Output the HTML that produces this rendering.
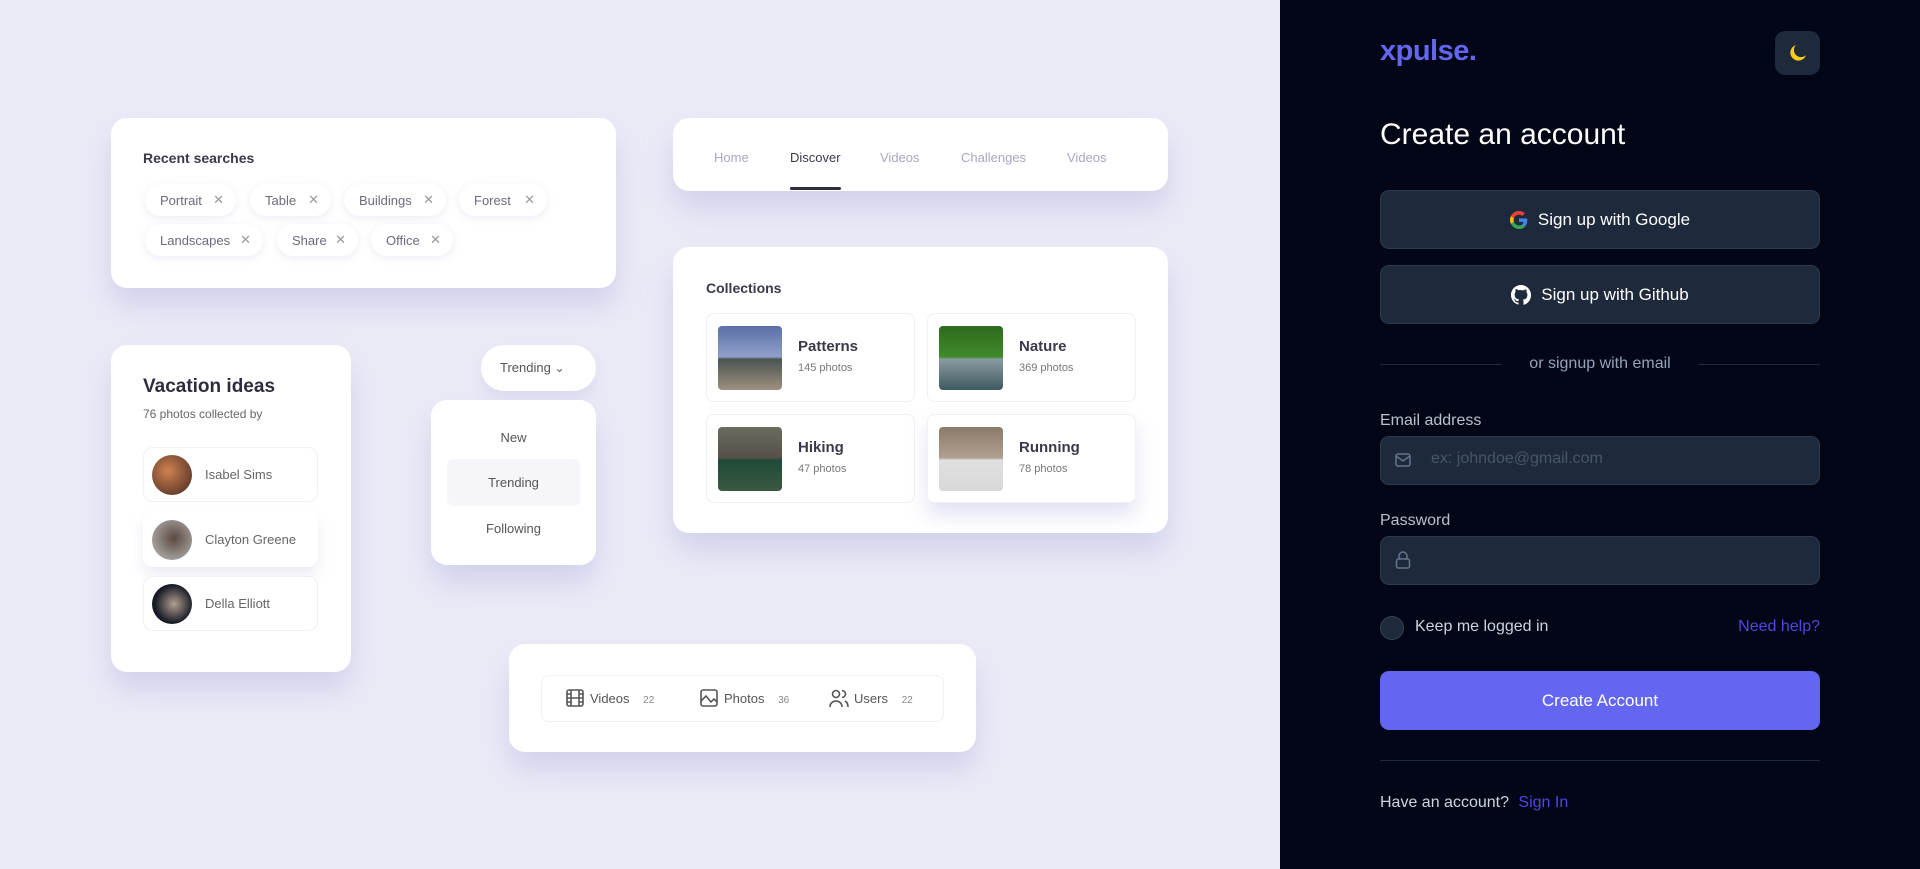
<!DOCTYPE html>
<html><head><meta charset="utf-8"><style>
*{box-sizing:border-box;margin:0;padding:0}
body{width:1920px;height:869px;overflow:hidden;position:relative;background:#ebebf7;font-family:"Liberation Sans",sans-serif}
.a{position:absolute}
.card{position:absolute;background:#fff;border-radius:16px;box-shadow:0 18px 30px rgba(160,160,215,.35)}
.chip{position:absolute;height:32px;border-radius:16px;background:#fff;box-shadow:0 2px 8px rgba(180,180,220,.25);font-size:13px;color:#6b6b7c;display:flex;align-items:center;padding-left:15px}
.chip span{position:absolute;right:12px;font-size:13px;color:#999}
.dark{position:absolute;left:1280px;top:0;width:640px;height:869px;background:#030616}
.btn{position:absolute;left:1380px;width:440px;border-radius:9px;background:#1e293b;border:1px solid #2c3a50;color:#fff;font-size:17px;display:flex;align-items:center;justify-content:center;gap:10px}
.lbl{position:absolute;left:1380px;color:#b8c0cc;font-size:16px}
.inp{position:absolute;left:1380px;width:440px;height:49px;border-radius:9px;background:#1e293b;border:1px solid #2c3a50}
.person{position:absolute;left:143px;width:175px;height:55px;border-radius:10px;background:#fff;border:1px solid #f0f0f5;display:flex;align-items:center;font-size:13px;color:#666}
.av{width:40px;height:40px;border-radius:50%;margin:0 13px 0 8px}
.col{position:absolute;width:209px;height:89px;border-radius:8px;border:1px solid #f0f0f5;background:#fff}
.th{position:absolute;left:11px;top:12px;width:64px;height:64px;border-radius:4px;overflow:hidden}
.ct{position:absolute;left:91px;top:24px;font-size:15px;font-weight:bold;color:#3a3a4a}
.cs{position:absolute;left:91px;top:48px;font-size:11px;color:#777}
.nav{position:absolute;top:150px;font-size:13px;color:#a7a7c0}
</style></head><body>

<div class="card" style="left:111px;top:118px;width:505px;height:170px"></div>
<div class="a" style="left:143px;top:150px;font-size:14px;font-weight:bold;color:#3a3a4a">Recent searches</div>
<div class="chip" style="left:145px;top:184px;width:91px">Portrait<span>✕</span></div>
<div class="chip" style="left:250px;top:184px;width:81px">Table<span>✕</span></div>
<div class="chip" style="left:344px;top:184px;width:102px">Buildings<span>✕</span></div>
<div class="chip" style="left:459px;top:184px;width:88px">Forest<span>✕</span></div>
<div class="chip" style="left:145px;top:224px;width:118px">Landscapes<span>✕</span></div>
<div class="chip" style="left:277px;top:224px;width:81px">Share<span>✕</span></div>
<div class="chip" style="left:371px;top:224px;width:82px">Office<span>✕</span></div>

<div class="card" style="left:673px;top:118px;width:495px;height:73px"></div>
<div class="nav" style="left:714px">Home</div>
<div class="nav" style="left:790px;color:#3a3a4a">Discover</div>
<div class="a" style="left:790px;top:187px;width:51px;height:3px;background:#2d2d45;border-radius:2px"></div>
<div class="nav" style="left:880px">Videos</div>
<div class="nav" style="left:961px">Challenges</div>
<div class="nav" style="left:1067px">Videos</div>

<div class="card" style="left:673px;top:247px;width:495px;height:286px"></div>
<div class="a" style="left:706px;top:280px;font-size:14px;font-weight:bold;color:#3a3a4a">Collections</div>
<div class="col" style="left:706px;top:313px"><div class="th" style="background:linear-gradient(180deg,#5b6fa8 0,#8fa0c8 48%,#4a5550 52%,#a09080 100%)"></div><div class="ct">Patterns</div><div class="cs">145 photos</div></div>
<div class="col" style="left:927px;top:313px"><div class="th" style="background:linear-gradient(180deg,#2f6a1e 0,#3f8a2a 48%,#8a9aa0 52%,#3d5a60 100%)"></div><div class="ct">Nature</div><div class="cs">369 photos</div></div>
<div class="col" style="left:706px;top:414px"><div class="th" style="background:linear-gradient(180deg,#6b6b60 0,#55504a 48%,#1f4a3a 52%,#3a5a40 100%)"></div><div class="ct">Hiking</div><div class="cs">47 photos</div></div>
<div class="col" style="left:927px;top:414px;box-shadow:0 12px 20px rgba(160,160,215,.3)"><div class="th" style="background:linear-gradient(180deg,#8a7a6a 0,#b0a090 48%,#e0e0e0 52%,#d8d8d8 100%)"></div><div class="ct">Running</div><div class="cs">78 photos</div></div>

<div class="card" style="left:111px;top:345px;width:240px;height:327px"></div>
<div class="a" style="left:143px;top:376px;font-size:19px;font-weight:bold;color:#2d2d3d">Vacation ideas</div>
<div class="a" style="left:143px;top:407px;font-size:12px;color:#666">76 photos collected by</div>
<div class="person" style="top:447px"><div class="av" style="background:radial-gradient(circle at 40% 40%,#d08050,#402820)"></div>Isabel Sims</div>
<div class="person" style="top:512px;border-color:transparent;box-shadow:0 8px 14px rgba(180,180,220,.25)"><div class="av" style="background:radial-gradient(circle at 55% 45%,#5a4a40,#c0c0c0)"></div>Clayton Greene</div>
<div class="person" style="top:576px"><div class="av" style="background:radial-gradient(circle at 55% 50%,#b0a090,#151a25 65%)"></div>Della Elliott</div>

<div class="card" style="left:481px;top:345px;width:115px;height:46px;border-radius:23px;box-shadow:0 8px 16px rgba(180,180,220,.3)"></div>
<div class="a" style="left:500px;top:360px;font-size:13px;color:#555">Trending <span style="font-size:12px">⌄</span></div>
<div class="card" style="left:431px;top:400px;width:165px;height:165px"></div>
<div class="a" style="left:447px;top:459px;width:133px;height:47px;background:#f6f6fa;border-radius:6px"></div>
<div class="a" style="left:431px;top:430px;width:165px;text-align:center;font-size:13px;color:#555">New</div>
<div class="a" style="left:431px;top:475px;width:165px;text-align:center;font-size:13px;color:#555">Trending</div>
<div class="a" style="left:431px;top:521px;width:165px;text-align:center;font-size:13px;color:#555">Following</div>

<div class="card" style="left:509px;top:644px;width:467px;height:108px"></div>
<div class="a" style="left:541px;top:675px;width:403px;height:47px;border-radius:8px;border:1px solid #f0f0f5"></div>
<svg class="a" style="left:566px;top:689px" width="18" height="18" viewBox="0 0 18 18" fill="none" stroke="#555" stroke-width="1.6"><rect x="1" y="1" width="16" height="16" rx="2"/><path d="M5 1v16M13 1v16M1 9h16M1 5h4M1 13h4M13 5h4M13 13h4"/></svg>
<div class="a" style="left:590px;top:691px;font-size:13px;color:#555">Videos <span style="font-size:10px;color:#888;margin-left:10px">22</span></div>
<svg class="a" style="left:700px;top:689px" width="18" height="18" viewBox="0 0 18 18" fill="none" stroke="#555" stroke-width="1.6"><rect x="1" y="1" width="16" height="16" rx="2"/><path d="M1 12l5-5 5 6 3-3 3 3"/></svg>
<div class="a" style="left:724px;top:691px;font-size:13px;color:#555">Photos <span style="font-size:10px;color:#888;margin-left:10px">36</span></div>
<svg class="a" style="left:829px;top:688px" width="20" height="20" viewBox="0 0 20 20" fill="none" stroke="#555" stroke-width="1.6"><circle cx="7" cy="6" r="3.5"/><path d="M1 19c0-4 3-6 6-6s6 2 6 6M13 2.5a3.5 3.5 0 010 7M16 13c2 1 3 3 3 6"/></svg>
<div class="a" style="left:854px;top:691px;font-size:13px;color:#555">Users <span style="font-size:10px;color:#888;margin-left:10px">22</span></div>

<div class="dark"></div>
<div class="a" style="left:1380px;top:35px;font-size:29px;font-weight:bold;color:#6366f1;letter-spacing:-0.5px">xpulse.</div>
<div class="a" style="left:1775px;top:31px;width:45px;height:44px;border-radius:10px;background:#1e293b"></div>
<svg class="a" style="left:1787px;top:42px" width="22" height="22" viewBox="0 0 22 22"><path d="M9 3a8 8 0 1010 10A6.5 6.5 0 019 3z" fill="#facc15"/></svg>
<div class="a" style="left:1380px;top:118px;font-size:30px;color:#fff">Create an account</div>
<div class="btn" style="top:190px;height:59px"><svg width="18" height="18" viewBox="0 0 48 48"><path fill="#EA4335" d="M24 9.5c3.5 0 6.6 1.2 9 3.5l6.7-6.7C35.6 2.4 30.2 0 24 0 14.6 0 6.6 5.4 2.7 13.3l7.8 6C12.4 13.7 17.7 9.5 24 9.5z"/><path fill="#4285F4" d="M46.1 24.5c0-1.6-.1-3.1-.4-4.5H24v9h12.4c-.5 2.9-2.2 5.3-4.6 7l7.5 5.8c4.4-4 6.8-10 6.8-17.3z"/><path fill="#FBBC05" d="M10.5 28.7A14.5 14.5 0 0110.5 19.3l-7.8-6A24 24 0 000 24c0 3.9.9 7.5 2.7 10.7l7.8-6z"/><path fill="#34A853" d="M24 48c6.5 0 11.9-2.1 15.9-5.8l-7.5-5.8c-2.1 1.4-4.8 2.3-8.4 2.3-6.3 0-11.6-4.2-13.5-9.9l-7.8 6C6.6 42.6 14.6 48 24 48z"/></svg>Sign up with Google</div>
<div class="btn" style="top:265px;height:59px"><svg width="20" height="20" viewBox="0 0 16 16"><path fill="#fff" d="M8 0C3.58 0 0 3.58 0 8c0 3.54 2.29 6.53 5.47 7.59.4.07.55-.17.55-.38v-1.33c-2.23.48-2.7-1.07-2.7-1.07-.36-.92-.89-1.17-.89-1.17-.73-.5.05-.49.05-.49.8.06 1.23.83 1.23.83.72 1.22 1.87.87 2.33.66.07-.52.28-.87.51-1.07-1.78-.2-3.64-.89-3.64-3.95 0-.87.31-1.59.82-2.15-.08-.2-.36-1.02.08-2.12 0 0 .67-.21 2.2.82A7.6 7.6 0 018 4.06c.68 0 1.36.09 2 .27 1.53-1.04 2.2-.82 2.2-.82.44 1.1.16 1.92.08 2.12.51.56.82 1.27.82 2.15 0 3.07-1.87 3.75-3.65 3.95.29.25.54.73.54 1.48v2.2c0 .21.15.46.55.38A8 8 0 0016 8c0-4.42-3.58-8-8-8z"/></svg>Sign up with Github</div>
<div class="a" style="left:1380px;top:364px;width:122px;height:1px;background:#1e293b"></div>
<div class="a" style="left:1698px;top:364px;width:122px;height:1px;background:#1e293b"></div>
<div class="a" style="left:1380px;top:355px;width:440px;text-align:center;font-size:16px;color:#94a3b8">or signup with email</div>
<div class="lbl" style="top:412px">Email address</div>
<div class="inp" style="top:436px"></div>
<svg class="a" style="left:1394px;top:451px" width="18" height="18" viewBox="0 0 18 18" fill="none" stroke="#64748b" stroke-width="1.5"><rect x="2" y="3" width="14" height="12" rx="2"/><path d="M2 5l7 5 7-5"/></svg>
<div class="a" style="left:1431px;top:450px;font-size:16px;color:#475569">ex: johndoe@gmail.com</div>
<div class="lbl" style="top:512px">Password</div>
<div class="inp" style="top:536px"></div>
<svg class="a" style="left:1394px;top:550px" width="18" height="20" viewBox="0 0 18 20" fill="none" stroke="#64748b" stroke-width="1.5"><rect x="2.5" y="9" width="13" height="9" rx="2"/><path d="M5 9V6a4 4 0 018 0v3"/></svg>
<div class="a" style="left:1380px;top:616px;width:24px;height:24px;border-radius:50%;background:#1e293b;border:1px solid #334155"></div>
<div class="a" style="left:1415px;top:618px;font-size:16px;color:#cbd5e1">Keep me logged in</div>
<div class="a" style="right:100px;top:618px;font-size:16px;color:#4f46e5">Need help?</div>
<div class="a" style="left:1380px;top:671px;width:440px;height:59px;border-radius:9px;background:#6366f1;color:#fff;font-size:17px;display:flex;align-items:center;justify-content:center">Create Account</div>
<div class="a" style="left:1380px;top:760px;width:440px;height:1px;background:#1e293b"></div>
<div class="a" style="left:1380px;top:794px;font-size:16px;color:#cbd5e1">Have an account? <span style="color:#4f46e5;margin-left:5px">Sign In</span></div>
</body></html>
